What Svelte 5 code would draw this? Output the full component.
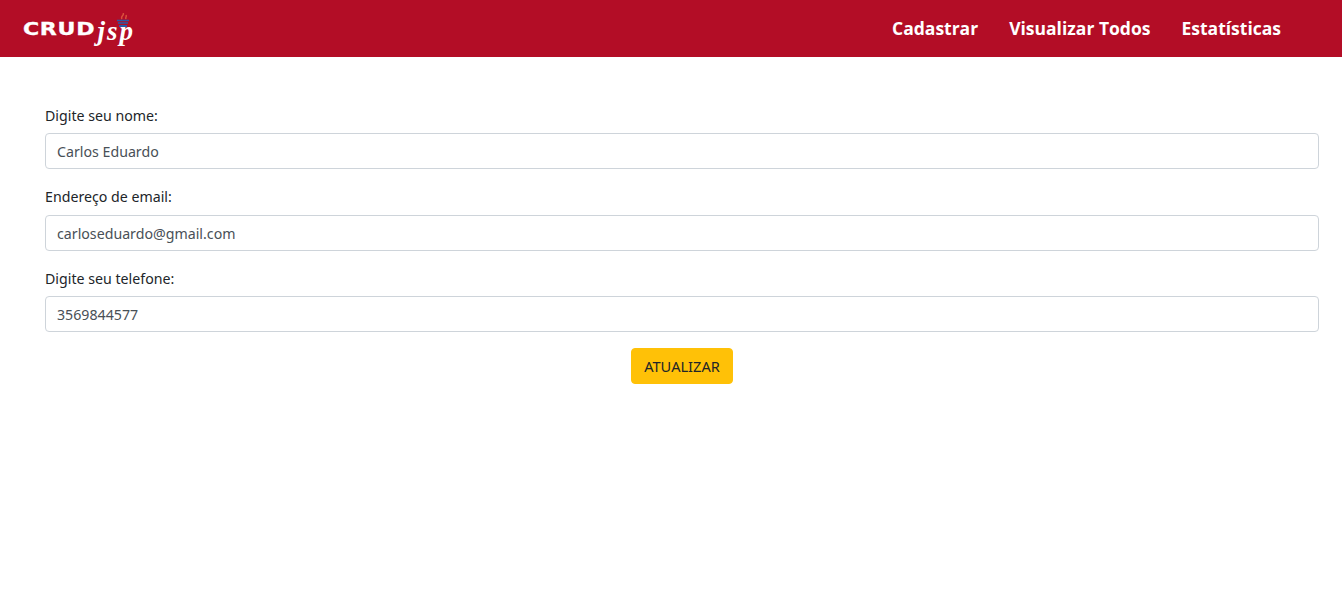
<script lang="ts">
	const fields = [
		{ label: 'Digite seu nome:', value: 'Carlos Eduardo', type: 'text' },
		{ label: 'Endereço de email:', value: 'carloseduardo@gmail.com', type: 'email' },
		{ label: 'Digite seu telefone:', value: '3569844577', type: 'text' },
	];
	const links = ['Cadastrar', 'Visualizar Todos', 'Estatísticas'];
</script>

<nav class="navbar">
	<a class="brand" href="#top">
		<span class="crud">CRUD</span><span class="jsp">jsp</span>
		<svg class="cup" width="14" height="15" viewBox="0 0 14 15">
			<path d="M7 0c2 2-3 3-1 6M10 2c1 2-1 2 0 4" fill="none" stroke="#d9503c" stroke-width="1.5" />
			<path d="M1 7.500h12M2 10h10" stroke="#2a5aa8" stroke-width="1.5" />
			<path d="M3 13h8" stroke="#2a5aa8" stroke-width="2" />
		</svg>
	</a>
	<div class="links">
		{#each links as link}
			<a href="#top">{link}</a>
		{/each}
	</div>
</nav>

<form class="form">
	{#each fields as field}
		<div class="group">
			<label for={field.type + field.label}>{field.label}</label>
			<input id={field.type + field.label} type={field.type} value={field.value} />
		</div>
	{/each}
	<div class="actions">
		<button type="button">ATUALIZAR</button>
	</div>
</form>

<style>
	:global(body) {
		margin: 0;
		background: #fff;
		font-family: "Noto Sans", "Open Sans", sans-serif;
		font-size: 14.2px;
		color: #212529;
	}

	.navbar {
		box-sizing: border-box;
		display: flex;
		align-items: center;
		justify-content: space-between;
		height: 57px;
		background: #b30d26;
		padding: 0 61px 2px 23px;
	}

	.brand {
		position: relative;
		display: flex;
		align-items: baseline;
		color: #fff;
		text-decoration: none;
	}

	.crud {
		font-family: "DejaVu Sans", sans-serif;
		font-weight: 700;
		font-size: 17px;
		letter-spacing: 0.5px;
		-webkit-text-stroke: 0.3px #fff;
		transform: scaleX(1.3);
		transform-origin: left;
		margin-right: 19px;
	}

	.jsp {
		font-family: "Liberation Serif", serif;
		font-style: italic;
		font-weight: 700;
		font-size: 27px;
		line-height: 20px;
		letter-spacing: 2px;
		transform: translateY(5px);
	}

	.cup {
		position: absolute;
		left: 93px;
		top: -3px;
	}

	.links {
		display: flex;
		gap: 31px;
	}

	.links a {
		color: #fff;
		font-family: "Open Sans", sans-serif;
		font-weight: 700;
		font-size: 17.5px;
		text-decoration: none;
	}

	.form {
		padding: 46.5px 23px 0 45px;
	}

	.group {
		margin-bottom: 16px;
	}

	label {
		display: block;
		line-height: 23.5px;
		margin-bottom: 6px;
	}

	input {
		display: block;
		box-sizing: border-box;
		width: 100%;
		height: 36px;
		padding: 1px 11px 0;
		border: 1px solid #ced4da;
		border-radius: 4px;
		background: #fff;
		color: #495057;
		font: inherit;
	}

	.actions {
		display: flex;
		justify-content: center;
	}

	button {
		width: 102px;
		height: 36px;
		padding: 0 0 1px;
		border: 1px solid #ffc107;
		border-radius: 4px;
		background: #ffc107;
		color: #212529;
		font: inherit;
		font-size: 14.6px;
	}
</style>
